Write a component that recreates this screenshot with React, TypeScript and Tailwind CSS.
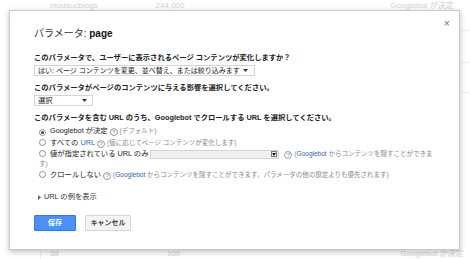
import React from 'react'

const font = { fontFamily: '"Liberation Sans", "Noto Sans CJK JP", sans-serif' }

function Help() {
  return (
    <span className="mx-[2px] inline-flex h-[8px] w-[8px] items-center justify-center rounded-full border border-[#9a9a9a] align-[-1px] text-[6px] leading-none text-[#888]">
      ?
    </span>
  )
}

function Radio({ checked }: { checked?: boolean }) {
  return (
    <span className="mr-[4px] inline-flex h-[7px] w-[7px] shrink-0 items-center justify-center rounded-full border border-[#8f8f8f] bg-white align-[-1px]">
      {checked && <span className="h-[3px] w-[3px] rounded-full bg-[#444]" />}
    </span>
  )
}

function Arrow() {
  return (
    <svg width="5" height="3" viewBox="0 0 5 3" className="shrink-0">
      <path d="M0 0h5L2.5 3z" fill="#333" />
    </svg>
  )
}

export default function App() {
  return (
    <div className="relative h-[259px] w-[470px] overflow-hidden bg-white" style={font}>
      {/* page behind the dialog */}
      <div className="flex h-[10px] items-end text-[8px] leading-none text-[#d0d0d0]">
        <span className="ml-[50px]">modaucblogs</span>
        <span className="ml-[58px]">244,000</span>
        <span className="ml-[206px]">Googlebot が決定</span>
      </div>
      <div className="absolute bottom-0 left-[40px] top-[240px] w-px bg-[#eee]" />
      <div className="absolute bottom-[1px] left-0 flex w-full text-[8px] leading-none text-[#d4d4d4]">
        <span className="ml-[50px]">38</span>
        <span className="ml-[108px]">100</span>
        <span className="ml-[220px]">Googlebot が決定</span>
      </div>
      <div className="absolute right-0 top-[30px] h-px w-[10px] bg-[#eee]" />
      <div className="absolute right-0 top-[62px] h-px w-[10px] bg-[#eee]" />
      <div className="absolute right-0 top-[92px] h-px w-[10px] bg-[#eee]" />

      {/* dialog */}
      <div className="absolute left-[9px] top-[10px] h-[240px] w-[451px] border border-[#c8c8c8] bg-white px-[24px] pt-[17px] text-[7.3px] leading-[12px] text-[#222] shadow-[0_2px_6px_rgba(0,0,0,0.25)]">
        <button className="absolute right-[9px] top-[7px] text-[11px] leading-none text-[#777]">×</button>

        <div className="text-[10px] leading-[12px] text-[#333]">
          パラメータ: <span className="font-bold text-[#111]">page</span>
        </div>

        <div className="mt-[12px] font-bold">このパラメータで、ユーザーに表示されるページ コンテンツが変化しますか？</div>
        <div className="mt-[1px] flex h-[11px] w-[221px] items-center justify-between border border-[#d4d4d4] bg-white pl-[3px] pr-[6px] text-[7px] leading-none">
          <span className="whitespace-nowrap">はい: ページ コンテンツを変更、並べ替え、または絞り込みます</span>
          <Arrow />
        </div>

        <div className="mt-[6px] font-bold">このパラメータがページのコンテンツに与える影響を選択してください。</div>
        <div className="mt-[1px] flex h-[11px] w-[59px] items-center justify-between border border-[#d4d4d4] bg-white pl-[3px] pr-[5px] leading-none">
          <span>選択</span>
          <Arrow />
        </div>

        <div className="mt-[6px] font-bold">このパラメータを含む URL のうち、Googlebot でクロールする URL を選択してください。</div>

        <div className="mt-[1px] flex flex-col">
          <div className="pl-[5px]">
            <Radio checked />
            Googlebot が決定
            <Help />
            <span className="text-[6.5px] text-[#888]">(デフォルト)</span>
          </div>
          <div className="pl-[5px]">
            <Radio />
            すべての <span className="text-[#3a5fa8]">URL</span>
            <Help />
            <span className="text-[6.5px] text-[#888]">(値に応じてページ コンテンツが変化します)</span>
          </div>
          <div className="pl-[5px] leading-[10px]">
            <Radio />
            値が指定されている URL のみ
            <span className="ml-[2px] mr-[3px] inline-flex h-[9px] w-[129px] items-center justify-end border border-[#d4d4d4] bg-[#f1f1f1] align-middle">
              <span className="mr-[1px] flex h-[6px] w-[6px] items-center justify-center border border-[#777] bg-white">
                <svg width="4" height="3" viewBox="0 0 4 3">
                  <path d="M0 0h4L2 3z" fill="#111" />
                </svg>
              </span>
            </span>
            <Help />
            <span className="text-[6.5px] text-[#888]">
              (<span className="text-[#3a5fa8]">Googlebot</span> からコンテンツを隠すことができます)
            </span>
          </div>
          <div className="whitespace-nowrap pl-[5px]">
            <Radio />
            クロールしない
            <Help />
            <span className="text-[6.5px] text-[#888]">
              (<span className="text-[#3a5fa8]">Googlebot</span> からコンテンツを隠すことができます。パラメータの他の設定よりも優先されます)
            </span>
          </div>
        </div>

        <div className="mt-[10px] flex items-center pl-[4px] text-[#333]">
          <svg width="3" height="5" viewBox="0 0 3 5" className="mr-[3px]">
            <path d="M0 0l3 2.5L0 5z" fill="#666" />
          </svg>
          URL の例を表示
        </div>

        <div className="mt-[12px] flex gap-[9px]">
          <button className="flex h-[16px] w-[42px] items-center justify-center rounded-[1px] border border-[#3079ed] bg-[#4d8ff5] text-[7px] font-bold text-white">
            保存
          </button>
          <button className="flex h-[16px] w-[46px] items-center justify-center rounded-[1px] border border-[#d6d6d6] bg-[#f4f4f4] text-[7px] font-bold text-[#444]">
            キャンセル
          </button>
        </div>
      </div>
    </div>
  )
}
